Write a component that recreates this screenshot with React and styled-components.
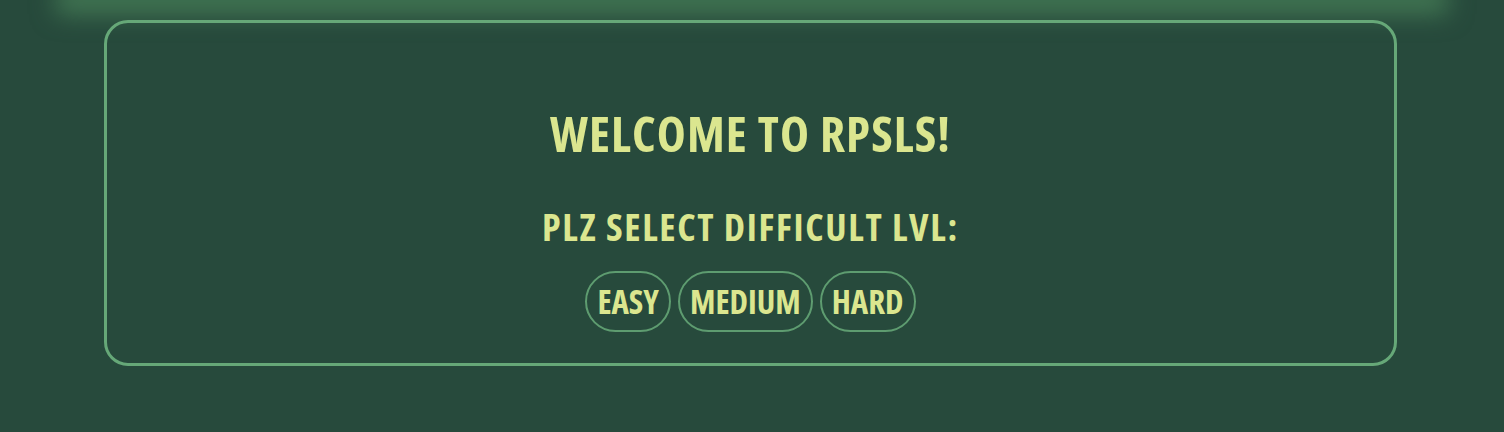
import React from 'react';
import styled, { createGlobalStyle } from 'styled-components';

const GlobalStyle = createGlobalStyle`
  html, body {
    margin: 0;
    padding: 0;
    background-color: #274a3c;
    font-family: "Open Sans", "DejaVu Sans Condensed", sans-serif;
    font-stretch: 75%;
  }
`;

const Page = styled.div`
  min-height: 432px;
  overflow: hidden;
`;

const TopGlow = styled.div`
  height: 0;
  margin: 0 70px;
  box-shadow: 0 0 24px 14px rgba(72, 128, 88, 0.85);
`;

const Main = styled.main`
  padding: 20px 107px 0 104px;
`;

const Card = styled.section`
  border: 3px solid #66a878;
  border-radius: 24px;
  height: 340px;
  display: flex;
  flex-direction: column;
  align-items: center;
  box-sizing: content-box;
`;

const Title = styled.h1`
  margin: 94px 0 0;
  font-size: 49px;
  line-height: 32px;
  font-weight: 700;
  letter-spacing: 1.1px;
  color: #dbe68f;
`;

const Subtitle = styled.h2`
  margin: 63px 0 0;
  font-size: 38px;
  line-height: 28px;
  font-weight: 700;
  letter-spacing: 1.7px;
  color: #dbe68f;
`;

const Options = styled.div`
  display: flex;
  gap: 7px;
  margin-top: 31px;
`;

const Option = styled.button`
  height: 61px;
  padding: 0 10px;
  border: 2px solid #5e9c70;
  border-radius: 31px;
  background: transparent;
  color: #dbe68f;
  font-family: inherit;
  font-stretch: inherit;
  font-size: 33px;
  font-weight: 700;
  cursor: pointer;
`;

const levels = ['EASY', 'MEDIUM', 'HARD'];

const App = () => {
  return (
    <Page>
      <GlobalStyle />
      <TopGlow />
      <Main>
        <Card>
          <Title>WELCOME TO RPSLS!</Title>
          <Subtitle>PLZ SELECT DIFFICULT LVL:</Subtitle>
          <Options>
            {levels.map((level) => (
              <Option key={level}>{level}</Option>
            ))}
          </Options>
        </Card>
      </Main>
    </Page>
  );
};

export default App;
